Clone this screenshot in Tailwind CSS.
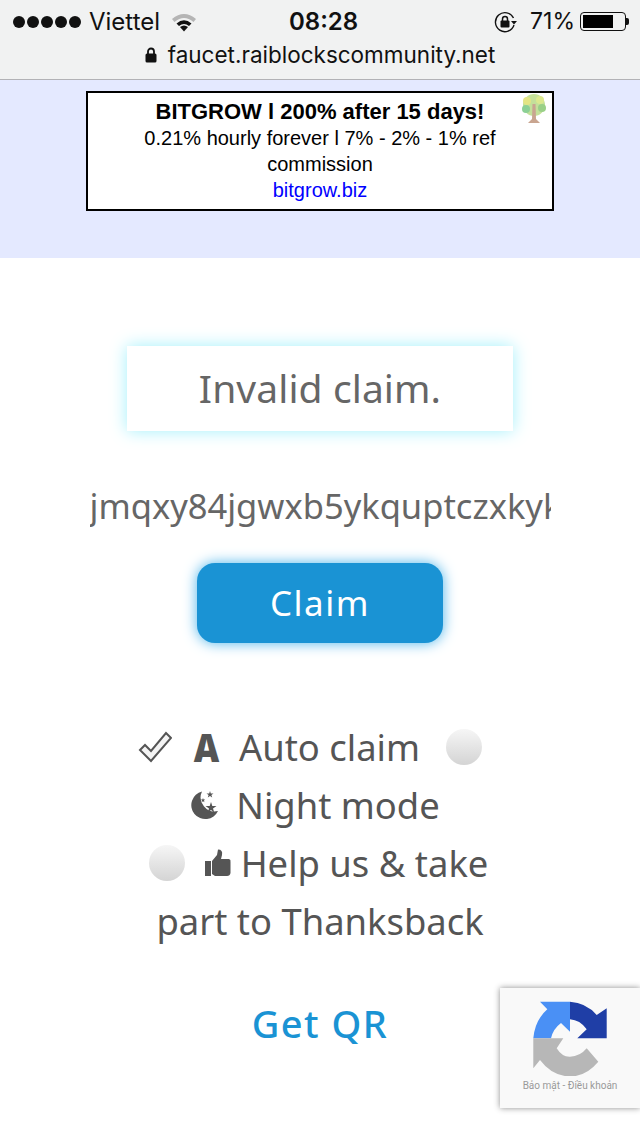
<!DOCTYPE html>
<html lang="en">
<head>
    <meta charset="UTF-8">
    <meta name="viewport" content="width=device-width, initial-scale=1.0">
    <title>Faucet</title>
    <script src="https://cdn.jsdelivr.net/npm/@tailwindcss/browser@4"></script>
</head>
<body class="bg-white w-[640px] h-[1136px] overflow-hidden relative font-['Noto_Sans',sans-serif] text-[#555]">

    <!-- Safari bar -->
    <div class="h-[80px] bg-[#f1f2f2] border-b border-[#b2b2b6] font-['Inter',sans-serif] text-[#111]">
        <div class="h-[40px] pt-[3px] flex items-center pl-[13px] pr-[11px] relative">
            <div class="flex gap-[2px] w-[68px]">
                <span class="w-[12px] h-[12px] rounded-full bg-[#111]"></span>
                <span class="w-[12px] h-[12px] rounded-full bg-[#111]"></span>
                <span class="w-[12px] h-[12px] rounded-full bg-[#111]"></span>
                <span class="w-[12px] h-[12px] rounded-full bg-[#111]"></span>
                <span class="w-[12px] h-[12px] rounded-full bg-[#111]"></span>
            </div>
            <span class="ml-[8px] text-[24px] leading-none">Viettel</span>
            <svg class="ml-[11px]" width="26" height="20" viewBox="0 0 26 20">
                <path d="M1 7 Q13 -3 25 7 L22.5 10 Q13 2 3.5 10 Z" fill="#b5b5b5"/>
                <path d="M5.5 11.5 Q13 5 20.5 11.5 L18 14 Q13 10 8 14 Z" fill="#111"/>
                <path d="M9 15 Q13 12 17 15 L13 19.5 Z" fill="#111"/>
            </svg>
            <span class="absolute left-[289px] text-[24px] leading-none font-semibold">08:28</span>
            <svg class="ml-auto" width="24" height="22" viewBox="0 0 24 22">
                <path d="M19.5 7 A9.5 9.5 0 1 0 20 14" fill="none" stroke="#111" stroke-width="1.4"/>
                <path d="M17 10 H23 L20 13.5 Z" fill="#111"/>
                <rect x="6.5" y="9.5" width="9" height="7" rx="1" fill="#111"/>
                <path d="M8.5 10 V8 A2.5 2.5 0 0 1 13.5 8 V10" fill="none" stroke="#111" stroke-width="1.5"/>
            </svg>
            <span class="ml-[12px] text-[23px] leading-none">71%</span>
            <div class="ml-[5px] w-[46px] h-[19px] border border-[#111] rounded-[4px] p-[2px]">
                <div class="w-[30px] h-full bg-black"></div>
            </div>
            <div class="w-[3px] h-[7px] bg-[#111] rounded-r-[2px]"></div>
        </div>
        <div class="h-[30px] flex items-center justify-center gap-[11px] text-[22.5px] leading-none">
            <svg width="12" height="16" viewBox="0 0 12 16">
                <rect x="0.5" y="6.5" width="11" height="9" rx="1.5" fill="#111"/>
                <path d="M3 7 V4.5 A3 3 0 0 1 9 4.5 V7" fill="none" stroke="#111" stroke-width="1.8"/>
            </svg>
            <span>faucet.raiblockscommunity.net</span>
        </div>
    </div>

    <!-- Ad banner -->
    <div class="h-[178px] bg-[#e4e9ff] pt-[11px]">
        <div class="relative mx-auto w-[468px] h-[120px] bg-white border-2 border-black text-center text-black font-['Liberation_Sans',sans-serif] text-[20px] leading-[26px] pt-[6px]">
            <div class="font-bold text-[22px]">BITGROW l 200% after 15 days!</div>
            <div class="px-[40px]">0.21% hourly forever l 7% - 2% - 1% ref commission</div>
            <div class="text-[#0000ff]">bitgrow.biz</div>
            <svg class="absolute right-[3px] top-[1px]" width="30" height="30" viewBox="0 0 30 30">
                <circle cx="15" cy="11" r="11" fill="#c4e09a"/>
                <circle cx="8" cy="7" r="4" fill="#e3e584"/>
                <circle cx="21" cy="6" r="4" fill="#dbe88f"/>
                <circle cx="23" cy="14" r="4" fill="#9ad088"/>
                <circle cx="7" cy="15" r="4" fill="#8cd095"/>
                <path d="M13.5 10 H16.5 L17 25 L21 29 H9 L13 25 Z" fill="#c9a590"/>
            </svg>
        </div>
    </div>

    <!-- Main -->
    <div class="flex flex-col items-center">
        <div class="mt-[88px] w-[386px] h-[85px] bg-white shadow-[0_0_16px_#a2f0fb] flex items-center justify-center text-[39px] tracking-[0.1px] text-[#666]">Invalid claim.</div>
        <div class="mt-[49px] w-[461px] h-[54px] overflow-hidden whitespace-nowrap text-[34.5px] leading-[52px] text-[#666]">jmqxy84jgwxb5ykquptczxkyk3tqg</div>
        <button class="mt-[29px] w-[246px] h-[80px] rounded-[18px] bg-[#1a93d4] text-white text-[35px] leading-[74px] tracking-[1.5px] shadow-[0_0_14px_#4db4ea]">Claim</button>

        <div class="mt-[75px] w-[400px] text-center text-[36.4px] leading-[58px] text-[#555]">
            <div class="flex items-center justify-center h-[58px] pr-[20px]">
                <svg width="34" height="34" viewBox="0 0 34 34">
                    <path d="M2 20 L7 15 L13 21 L28 3 L33 8 L13 31 Z" fill="#f4f4f4" stroke="#555" stroke-width="2" stroke-linejoin="miter"/>
                </svg>
                <span class="ml-[21px] w-[27px] flex justify-center font-black text-[39px] scale-x-[0.9]">A</span>
                <span class="ml-[19px]">Auto claim</span>
                <span class="ml-[26px] w-[36px] h-[36px] rounded-full bg-gradient-to-b from-[#f6f6f6] to-[#d4d4d4]"></span>
            </div>
            <div class="flex items-center justify-center h-[58px] pr-[11px]">
                <svg width="30" height="30" viewBox="0 0 30 30">
                    <path d="M13 1.5 A14 14 0 1 0 29 21 A14 14 0 0 1 13 1.5 Z" fill="#555"/>
                    <path d="M22 12 L23.3 16 L27.5 16 L24 18.5 L25.3 22.5 L22 20 L18.7 22.5 L20 18.5 L16.5 16 L20.7 16 Z" fill="#555"/>
                    <path d="M21 1 L21.8 3.5 L24.5 3.5 L22.4 5 L23.2 7.5 L21 6 L18.8 7.5 L19.6 5 L17.5 3.5 L20.2 3.5 Z" fill="#555"/>
                    <path d="M14 8 L14.6 9.5 L16.2 9.5 L15 10.6 L15.4 12.2 L14 11.3 L12.6 12.2 L13 10.6 L11.8 9.5 L13.4 9.5 Z" fill="#555"/>
                </svg>
                <span class="ml-[17px]">Night mode</span>
            </div>
            <div class="flex items-center justify-center h-[58px] pr-[3px]">
                <span class="w-[36px] h-[36px] rounded-full bg-gradient-to-b from-[#f6f6f6] to-[#d4d4d4]"></span>
                <svg class="ml-[20px]" width="26" height="28" viewBox="0 0 26 28">
                    <path d="M0 12 H6 V27 H0 Z" fill="#555"/>
                    <path d="M7 12 L12 6 L13 0.5 Q18 0.5 17 6 L16 10 H24 Q26 10.5 25.5 13 L25.5 24 Q25 27 22 27 H10 L7 25 Z" fill="#555"/>
                </svg>
                <span class="ml-[10px]">Help us &amp; take</span>
            </div>
            <div class="h-[58px]">part to Thanksback</div>
        </div>

        <a class="mt-[48px] text-[38px] leading-[50px] tracking-[1.5px] text-[#1a93d4] font-medium">Get QR</a>
    </div>

    <!-- reCAPTCHA badge -->
    <div class="absolute left-[500px] top-[988px] w-[140px] h-[120px] bg-[#f9f9f9] shadow-[0_0_6px_rgba(0,0,0,0.45)] flex flex-col items-center">
        <svg class="mt-[12px]" width="76" height="76" viewBox="0 0 76 76">
            <path d="M8 1.7 H38 V31.7 L29 23 Q21 29 19 38.3 H1.3 Q3 20 15.3 9.3 Z" fill="#4a90f5"/>
            <path d="M38 1.7 Q54 2.5 64.7 15 L74.7 8.3 V38.3 H45.3 L54.7 29.3 Q48 20 38 19.3 Z" fill="#1f3ea6"/>
            <path d="M1.3 38.3 H31.3 L24.7 48.3 Q30 57 38 56.7 Q48 56.5 54.7 48.3 L66.3 61.7 Q54 76.5 38 76.5 Q20 76 8 60 L1.3 68.3 Z" fill="#b7b7b7"/>
        </svg>
        <span class="mt-[5px] text-[10px] leading-none text-[#999] font-['Roboto',sans-serif]">Bảo mật - Điều khoản</span>
    </div>
</body>
</html>
